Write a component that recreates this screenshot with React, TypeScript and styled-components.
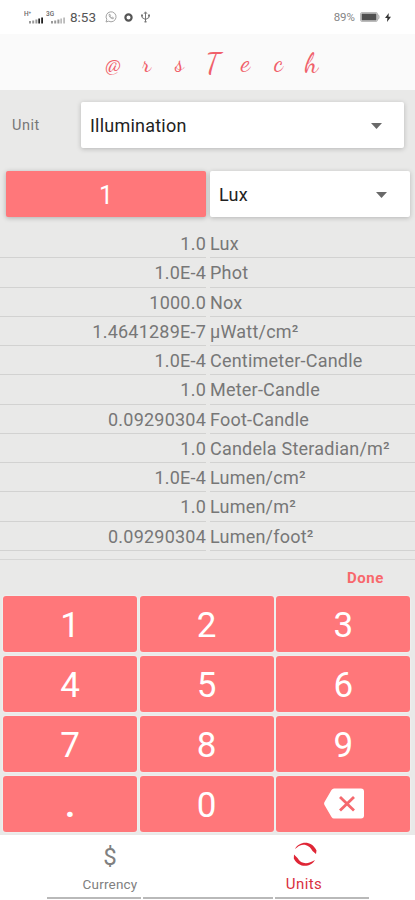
import React from 'react';
import styled, { createGlobalStyle } from 'styled-components';

const GlobalStyle = createGlobalStyle`
  * { box-sizing: border-box; }
  body { margin: 0; background: #fff; font-family: Roboto, "Noto Sans", sans-serif; }
  button { font: inherit; border: 0; padding: 0; margin: 0; }
`;

const Screen = styled.div`
  width: 415px;
  height: 900px;
  display: flex;
  flex-direction: column;
  overflow: hidden;
  background: #e9e9e8;
`;

const StatusBar = styled.div`
  height: 34px;
  flex: none;
  display: flex;
  align-items: center;
  background: #fff;
  padding: 0 24px 0 24px;
  color: #555;
`;

const Clock = styled.span`
  width: 27px;
  margin-left: 2px;
  font-size: 13.5px;
  line-height: 34px;
  white-space: nowrap;
`;

const StatusIcons = styled.div`
  display: flex;
  align-items: center;
  margin-left: 8px;
  gap: 6px;
`;

const BatteryGroup = styled.div`
  margin-left: auto;
  display: flex;
  align-items: center;
  font-size: 11.5px;
  color: #858585;
  gap: 5px;
`;

const Header = styled.header`
  height: 56px;
  flex: none;
  display: grid;
  grid-template-columns: repeat(7, 33px);
  padding: 3px 0 0 97px;
  background: #fafafa;
  color: #f0606a;
  font-family: "Dancing Script", "Liberation Serif", cursive;
  font-size: 25px;
  line-height: 52px;
  text-align: center;
`;

const Letter = styled.span<{ $size?: number }>`
  font-size: ${(p) => p.$size ?? 25}px;
`;

const UnitRow = styled.div`
  height: 81px;
  flex: none;
  display: flex;
  align-items: flex-start;
  padding: 12px 11px 0 12px;
`;

const UnitLabel = styled.div`
  width: 69px;
  font-size: 14.5px;
  line-height: 48px;
  letter-spacing: 0.5px;
  color: #777;
`;

const Select = styled.button<{ $arrow: number }>`
  flex: 1;
  height: 46px;
  display: flex;
  align-items: center;
  justify-content: space-between;
  padding: 1px ${(p) => p.$arrow}px 0 9px;
  background: #fff;
  border-radius: 2px;
  box-shadow: 0 1px 5px rgba(0, 0, 0, 0.22);
  color: #222;
  font-size: 18px;
  letter-spacing: 0.22px;
`;

const InputRow = styled.div`
  height: 58px;
  flex: none;
  display: grid;
  grid-template-columns: 200px 200px;
  gap: 4px;
  padding-left: 6px;
`;

const ValueBox = styled.div`
  height: 46px;
  background: #ff777a;
  border-radius: 2px;
  box-shadow: 0 1px 5px rgba(0, 0, 0, 0.25);
  color: #fff;
  font-size: 25px;
  line-height: 50px;
  text-align: center;
`;

const Results = styled.div`
  height: 331px;
  flex: none;
  border-bottom: 1px solid #d6d6d5;
`;

const ResultRow = styled.div`
  height: 29.25px;
  display: grid;
  grid-template-columns: 206px 1fr;
  grid-template-rows: 100%;
  column-gap: 4px;
`;

const Cell = styled.div<{ $end?: boolean }>`
  border-bottom: 1px solid #d2d2d1;
  color: #777;
  font-size: 18px;
  line-height: 30px;
  letter-spacing: 0.22px;
  text-align: ${(p) => (p.$end ? 'right' : 'left')};
  white-space: nowrap;
`;

const DoneBar = styled.div`
  height: 36px;
  flex: none;
  display: flex;
  justify-content: flex-end;
  padding-right: 31px;
  color: #f8686c;
  font-size: 15px;
  font-weight: 700;
  line-height: 37px;
  letter-spacing: 0.6px;
`;

const Keypad = styled.div`
  height: 239px;
  flex: none;
  display: grid;
  grid-template-columns: 134px 134px 134px;
  grid-auto-rows: 56px;
  gap: 4px 2.7px;
  padding-left: 3px;
`;

const Key = styled.button<{ $dot?: boolean }>`
  display: flex;
  align-items: center;
  justify-content: center;
  background: #ff777a;
  border-radius: 3px;
  box-shadow: 0 0 2px rgba(255, 255, 255, 0.9);
  color: #fff;
  font-size: 35px;
  font-weight: ${(p) => (p.$dot ? 700 : 400)};
  line-height: 56px;
  padding: 3px 0 0;
`;

const DeleteKey = styled(Key)`
  padding: 0 0 1px 2px;
`;

const Nav = styled.nav`
  height: 65px;
  flex: none;
  display: flex;
  flex-direction: column;
  background: #fff;
`;

const Tabs = styled.div`
  height: 62px;
  display: grid;
  grid-template-columns: 194px 194px;
  padding-left: 13px;
`;

const Tab = styled.div<{ $active?: boolean }>`
  display: flex;
  flex-direction: column;
  align-items: center;
  color: ${(p) => (p.$active ? '#d92f40' : '#808080')};
  font-size: ${(p) => (p.$active ? '15px' : '13.5px')};
  letter-spacing: ${(p) => (p.$active ? '0.4px' : '0.2px')};
`;

const TabIcon = styled.div`
  height: 40px;
  display: flex;
  align-items: center;
  font-size: 24px;
  padding-top: 4px;
`;

const UnitsIcon = styled.svg`
  margin: 0 0 6px 2px;
`;

const TabText = styled.div`
  line-height: 18px;
`;

const Underlines = styled.div`
  display: grid;
  grid-template-columns: 94px 130px 94px;
  gap: 2px;
  padding-left: 47px;
`;

const Underline = styled.div`
  height: 2px;
  background: #b9b9b9;
`;

const Signal = ({ label }: { label: string }) => (
  <svg width="22" height="14" viewBox="0 0 22 14">
    <text x="0" y="5.5" fontSize="6.5" fontWeight="500" fill="#666" fontFamily="Roboto, sans-serif">{label}</text>
    <path d="M5 11h2v2.5H5zM8.2 10.5h2v3h-2zM11.4 9.5h2v4h-2z" fill="#999" />
    <path d="M14.3 8.5H16v5h-1.7zM17.2 7.5H19v6h-1.8z" fill={label === '3G' ? '#bbb' : '#222'} />
  </svg>
);

const Arrow = () => (
  <svg width="11" height="6" viewBox="0 0 11 6">
    <path d="M0 0h11L5.5 6z" fill="#696969" />
  </svg>
);

const results = [
  ['1.0', 'Lux'],
  ['1.0E-4', 'Phot'],
  ['1000.0', 'Nox'],
  ['1.4641289E-7', 'µWatt/cm²'],
  ['1.0E-4', 'Centimeter-Candle'],
  ['1.0', 'Meter-Candle'],
  ['0.09290304', 'Foot-Candle'],
  ['1.0', 'Candela Steradian/m²'],
  ['1.0E-4', 'Lumen/cm²'],
  ['1.0', 'Lumen/m²'],
  ['0.09290304', 'Lumen/foot²'],
];

const keys = ['1', '2', '3', '4', '5', '6', '7', '8', '9', '.', '0'];

export default function App() {
  return (
    <Screen>
      <GlobalStyle />
      <StatusBar>
        <Signal label="H⁺" />
        <Signal label="3G" />
        <Clock>8:53</Clock>
        <StatusIcons>
          <svg width="12" height="12" viewBox="0 0 12 12" fill="none" stroke="#999">
            <path d="M1 11l.8-2.6a5 5 0 1 1 1.9 1.8z" strokeWidth=".9" />
            <path d="M4.1 3.4c-.4 2 1.7 4.5 4 4.4l.5-1-1.5-.7-.7.5-1.3-1.4.5-.7-.6-1.2z" strokeWidth=".8" />
          </svg>
          <svg width="11" height="11" viewBox="0 0 11 11" fill="none">
            <circle cx="5.5" cy="5.5" r="3.1" stroke="#555" strokeWidth="2.2" />
          </svg>
          <svg width="11" height="12" viewBox="0 0 11 12" fill="none" stroke="#666">
            <path d="M5.5 11V1.5M4 2.8l1.5-2 1.5 2M2 4v2.5l3.5 2L9 6.5V4" strokeWidth=".9" />
            <path d="M1 3.5h2v2H1zM8 3.5h2v2H8zM4.5 10h2v1.5h-2z" fill="#777" stroke="none" />
          </svg>
        </StatusIcons>
        <BatteryGroup>
          <span>89%</span>
          <svg width="20" height="10" viewBox="0 0 20 10">
            <rect x=".5" y=".5" width="17" height="9" rx="1.5" fill="none" stroke="#bbb" />
            <path d="M1.5 1.5h15v7h-15z" fill="#505050" />
            <path d="M18 2.5c1.3 1.2 1.3 3.8 0 5" fill="none" stroke="#999" />
          </svg>
          <svg width="6" height="9" viewBox="0 0 6 9">
            <path d="M3.8 0L0 5h2.4L2 9l4-5.2H3.5z" fill="#333" />
          </svg>
        </BatteryGroup>
      </StatusBar>
      <Header>
        <Letter $size={27}>@</Letter>
        <Letter>r</Letter>
        <Letter>s</Letter>
        <Letter $size={28}>T</Letter>
        <Letter $size={27}>e</Letter>
        <Letter $size={27}>c</Letter>
        <Letter $size={28}>h</Letter>
      </Header>
      <UnitRow>
        <UnitLabel>Unit</UnitLabel>
        <Select $arrow={22}>Illumination<Arrow /></Select>
      </UnitRow>
      <InputRow>
        <ValueBox>1</ValueBox>
        <Select $arrow={23}>Lux<Arrow /></Select>
      </InputRow>
      <Results>
        {results.map(([value, unit]) => (
          <ResultRow key={unit}>
            <Cell $end>{value}</Cell>
            <Cell>{unit}</Cell>
          </ResultRow>
        ))}
      </Results>
      <DoneBar>Done</DoneBar>
      <Keypad>
        {keys.map((k) => (
          <Key key={k} $dot={k === '.'}>{k}</Key>
        ))}
        <DeleteKey aria-label="Delete">
          <svg width="40" height="31" viewBox="0 0 40 31">
            <path d="M10 .5h27a3 3 0 0 1 3 3v24a3 3 0 0 1-3 3H10Q8.5 30.5 7.5 29L.5 17Q-.3 15.5.5 14L7.5 2Q8.5.5 10 .5z" fill="#fff" />
            <path d="M16 9l14 13.5M30 9L16 22.5" stroke="#f5696e" strokeWidth="2.8" />
          </svg>
        </DeleteKey>
      </Keypad>
      <Nav>
        <Tabs>
          <Tab>
            <TabIcon>$</TabIcon>
            <TabText>Currency</TabText>
          </Tab>
          <Tab $active>
            <TabIcon>
              <UnitsIcon width="24" height="24" viewBox="0 0 24 24" fill="#df2636">
                <path d="M2 7C6-.5 18-2.5 23.5 8.5L23 12 19.5 9C16.5 2.5 9 .5 4 5.5z" />
                <path d="M1 12.5l3.5 3.5C8 22.5 15 22.5 22 18 18 25.5 5.5 26.5.8 16.5z" />
              </UnitsIcon>
            </TabIcon>
            <TabText>Units</TabText>
          </Tab>
        </Tabs>
        <Underlines>
          <Underline />
          <Underline />
          <Underline />
        </Underlines>
      </Nav>
    </Screen>
  );
}
